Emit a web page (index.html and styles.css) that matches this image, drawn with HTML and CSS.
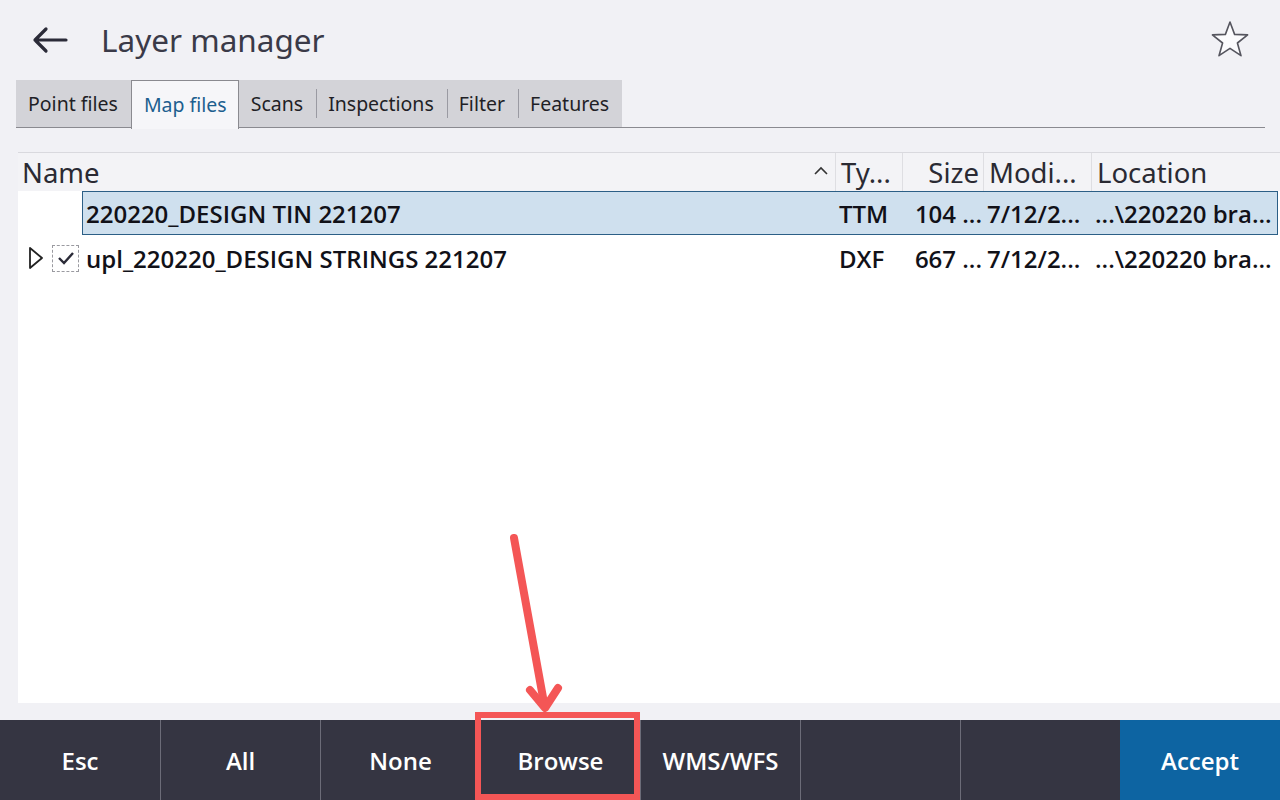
FILE: index.html
```html
<!DOCTYPE html>
<html lang="en">
<head>
    <meta charset="UTF-8">
    <title>Layer manager</title>
    <link rel="stylesheet" href="styles.css">
</head>
<body>
    <div class="screen">
        <header class="topbar">
            <svg class="back" width="36" height="28" viewBox="0 0 36 28">
                <path d="M34 14H3M14 3L3 14l11 11" fill="none" stroke="#2b2b38" stroke-width="3.2" stroke-linecap="round" stroke-linejoin="round"/>
            </svg>
            <h1 class="title">Layer manager</h1>
            <svg class="star" width="40" height="38" viewBox="0 0 40 38">
                <path d="M20 2l4.6 12.4 13 .5-10.2 8.1 3.6 12.7L20 28.4 9 35.7l3.6-12.7L2.4 14.9l13-.5z" fill="#fbfbfd" stroke="#55555e" stroke-width="1.6" stroke-linejoin="round"/>
            </svg>
        </header>

        <nav class="tabs">
            <div class="tab">Point files</div>
            <div class="tab active">Map files</div>
            <div class="tab">Scans</div>
            <div class="tab sep">Inspections</div>
            <div class="tab sep">Filter</div>
            <div class="tab sep">Features</div>
        </nav>

        <section class="table">
            <div class="thead">
                <div class="th name">Name
                    <svg class="sort" width="16" height="10" viewBox="0 0 16 10"><path d="M2 8l6-6 6 6" fill="none" stroke="#333" stroke-width="1.6"/></svg>
                </div>
                <div class="th">Ty...</div>
                <div class="th right">Size</div>
                <div class="th">Modi...</div>
                <div class="th">Location</div>
            </div>
            <div class="tbody">
                <div class="row">
                    <div class="lead"></div>
                    <div class="cells selected">
                        <div class="td">220220_DESIGN TIN 221207</div>
                        <div class="td">TTM</div>
                        <div class="td size">104 ...</div>
                        <div class="td">7/12/2...</div>
                        <div class="td">...\220220 bra...</div>
                    </div>
                </div>
                <div class="row">
                    <div class="lead">
                        <svg class="expand" width="16" height="24" viewBox="0 0 16 24"><path d="M2 2l12 10L2 22z" fill="none" stroke="#222" stroke-width="1.8" stroke-linejoin="round"/></svg>
                        <span class="check">
                            <svg width="18" height="14" viewBox="0 0 18 14"><path d="M2 7l5 5 9-10" fill="none" stroke="#2b2b38" stroke-width="2.4"/></svg>
                        </span>
                    </div>
                    <div class="cells">
                        <div class="td">upl_220220_DESIGN STRINGS 221207</div>
                        <div class="td">DXF</div>
                        <div class="td size">667 ...</div>
                        <div class="td">7/12/2...</div>
                        <div class="td">...\220220 bra...</div>
                    </div>
                </div>
            </div>
        </section>

        <footer class="actions">
            <button class="action">Esc</button>
            <button class="action">All</button>
            <button class="action">None</button>
            <button class="action">Browse</button>
            <button class="action">WMS/WFS</button>
            <button class="action"></button>
            <button class="action"></button>
            <button class="action accept">Accept</button>
        </footer>

        <!-- annotation over the screenshot -->
        <div class="highlight-box"></div>
        <svg class="pointer" width="1280" height="800" viewBox="0 0 1280 800">
            <path d="M514 538L544 703" fill="none" stroke="#f45656" stroke-width="8" stroke-linecap="round"/>
            <path d="M530 690l15 18 13-20" fill="none" stroke="#f45656" stroke-width="8" stroke-linecap="round" stroke-linejoin="round"/>
        </svg>
    </div>
</body>
</html>
```

FILE: styles.css
```css
body {
    margin: 0;
    font-family: "Noto Sans", "Open Sans", sans-serif;
    background: #f1f1f5;
    color: #1e1e26;
}
.screen {
    position: relative;
    width: 1280px;
    height: 800px;
    display: flex;
    flex-direction: column;
    overflow: hidden;
}
.topbar {
    height: 80px;
    display: flex;
    align-items: center;
    padding: 0 30px 0 32px;
    box-sizing: border-box;
}
.back {
    margin-top: -1px;
}
.title {
    margin: 0 0 0 33px;
    font-size: 31.5px;
    font-weight: 400;
    color: #3a3a48;
    flex: 1;
    margin-top: -2px;
}
.star {
    margin-top: -2px;
}
.tabs {
    display: flex;
    margin: 0 15px 0 16px;
    height: 48px;
    border-bottom: 1.5px solid #8a8a90;
    box-sizing: border-box;
}
.tab {
    background: #d3d3d8;
    font-size: 19.5px;
    padding: 0 13px 0 12px;
    display: flex;
    align-items: center;
    position: relative;
    color: #1f1f26;
}
.tab.sep::before {
    content: "";
    position: absolute;
    left: 0;
    top: 9px;
    bottom: 9px;
    border-left: 1px solid #9a9aa2;
}
.tab.active {
    background: #f6f6f9;
    color: #1d5f8f;
    border: 1px solid #8a8a90;
    border-bottom: none;
    margin-bottom: -1.5px;
    padding: 0 11px 0 12px;
}
.table {
    margin: 24px 0 0 18px;
    height: 551px;
    display: flex;
    flex-direction: column;
}
.thead {
    display: grid;
    grid-template-columns: 817px 67px 81px 108px 1fr;
    height: 38px;
    border-top: 1px solid #d9d9de;
    background: #f3f3f6;
}
.th {
    font-size: 27.5px;
    display: flex;
    align-items: center;
    padding: 0 5px;
    border-left: 1px solid #dedee2;
    color: #2a2a33;
    white-space: nowrap;
    overflow: hidden;
}
.th.name {
    border-left: none;
    justify-content: space-between;
    padding-left: 4px;
}
.th.right {
    justify-content: flex-end;
    padding-right: 4px;
}
.sort {
    margin-right: 1px;
    margin-top: -2px;
}
.tbody {
    flex: 1;
    background: #fff;
}
.row {
    display: flex;
    height: 44px;
}
.lead {
    width: 64px;
    display: flex;
    align-items: center;
    padding-left: 10px;
    box-sizing: border-box;
    gap: 8px;
    margin-top: 2px;
}
.check {
    width: 25px;
    height: 25px;
    border: 1px dashed #9a9aa0;
    display: flex;
    align-items: center;
    justify-content: center;
}
.cells {
    flex: 1;
    display: grid;
    grid-template-columns: 753px 67px 81px 108px 1fr;
    font-family: "Open Sans", "Noto Sans", sans-serif;
    font-size: 24px;
    font-weight: 600;
    margin-right: 2px;
    border: 1.5px solid transparent;
    color: #111118;
}
.row + .row .cells {
    margin-top: 2px;
}
.cells.selected {
    background: #cfe0ee;
    border-color: #2c5f86;
}
.td {
    display: flex;
    align-items: center;
    padding: 0 3px;
    white-space: nowrap;
    overflow: hidden;
}
.td.size {
    justify-content: flex-end;
    padding-right: 2px;
}
.actions {
    margin-top: auto;
    height: 80px;
    display: grid;
    grid-template-columns: repeat(8, 1fr);
    background: #353542;
}
.action {
    border: none;
    border-left: 1px solid #6c6c78;
    background: transparent;
    color: #fff;
    font-family: "Open Sans", "Noto Sans", sans-serif;
    font-size: 24px;
    font-weight: 600;
}
.action:first-child {
    border-left: none;
}
.action.accept {
    background: #0d64a2;
    border-left: none;
}
.highlight-box {
    position: absolute;
    left: 475px;
    top: 712px;
    width: 165px;
    height: 88px;
    border: 6px solid #f45656;
    box-sizing: border-box;
}
.pointer {
    position: absolute;
    left: 0;
    top: 0;
    pointer-events: none;
}
```
